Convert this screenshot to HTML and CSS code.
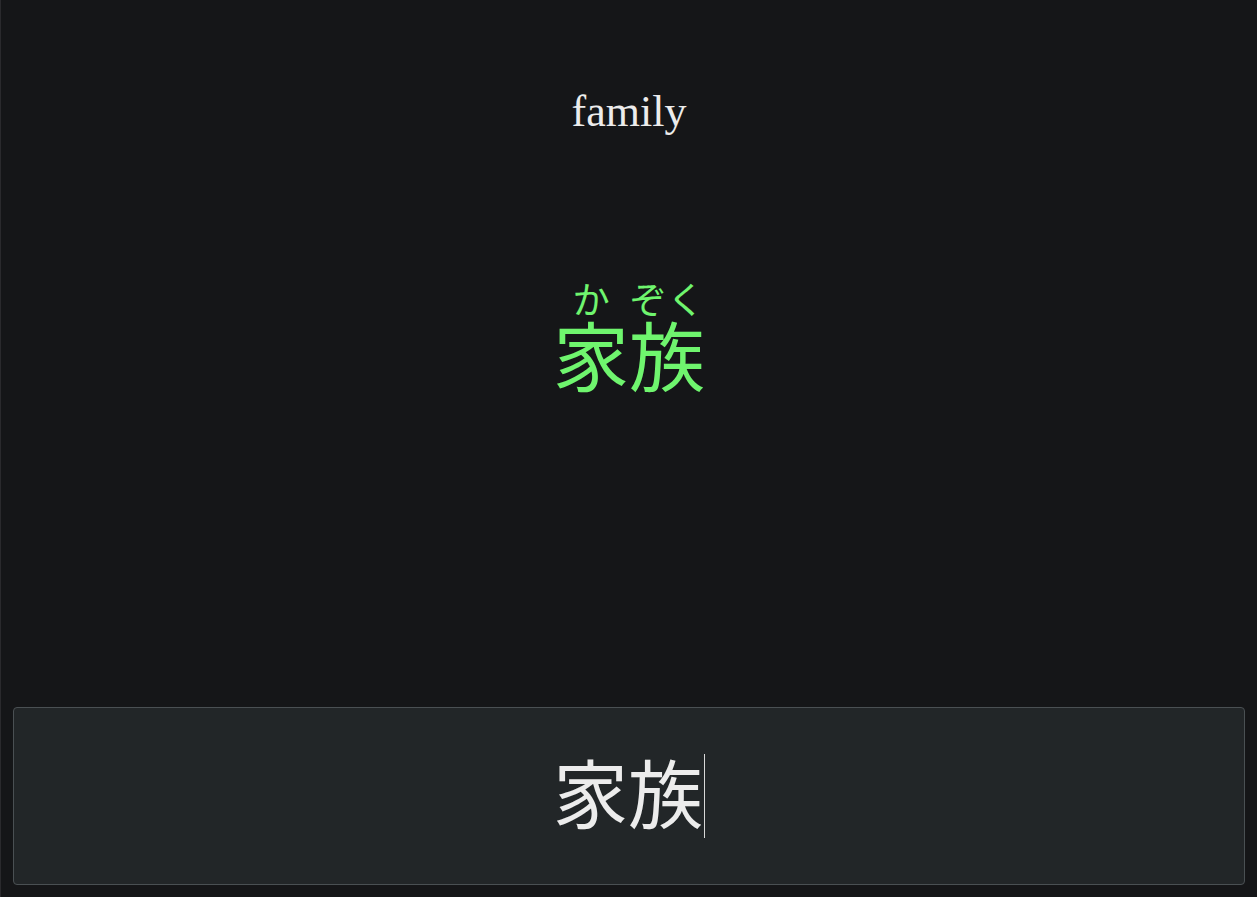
FILE: index.html
```html
<!DOCTYPE html>
<html lang="ja">
<head>
<meta charset="utf-8">
<title>家族</title>
<link rel="stylesheet" href="styles.css">
</head>
<body>
<div class="app">
  <div class="prompt">family</div>
  <div class="answer"><ruby>家<rt>か</rt>族<rt>ぞく</rt></ruby></div>
  <div class="spacer"></div>
  <div class="input-box"><span class="typed">家族</span><span class="caret"></span></div>
</div>
</body>
</html>
```
FILE: styles.css
```css
html, body {
  margin: 0;
  padding: 0;
  background: #151618;
}
.app {
  height: 897px;
  box-sizing: border-box;
  display: flex;
  flex-direction: column;
  align-items: stretch;
  padding: 0 12px 12px 12px;
  border-left: 1px solid #2a2a2d;
}
.prompt {
  font-family: "Liberation Serif", "Times New Roman", serif;
  font-size: 44px;
  color: #ececec;
  text-align: center;
  margin-top: 86px;
  line-height: 52px;
}
.answer {
  margin-top: 143px;
  text-align: center;
  font-family: "Noto Sans CJK JP", sans-serif;
  font-size: 76px;
  color: #6ff56e;
  line-height: 1.1;
}
.answer rt {
  font-size: 49%;
}
.spacer {
  flex: 1;
}
.input-box {
  height: 178px;
  box-sizing: border-box;
  background: #222628;
  border: 1px solid #4a5053;
  border-radius: 4px;
  display: flex;
  align-items: center;
  justify-content: center;
  font-family: "Noto Sans CJK JP", sans-serif;
  font-size: 75px;
  color: #ececec;
}
.typed {
  line-height: 1;
  margin-bottom: 12px;
}
.caret {
  width: 1px;
  height: 84px;
  background: #d8d8d8;
  margin-left: 1px;
}
```
